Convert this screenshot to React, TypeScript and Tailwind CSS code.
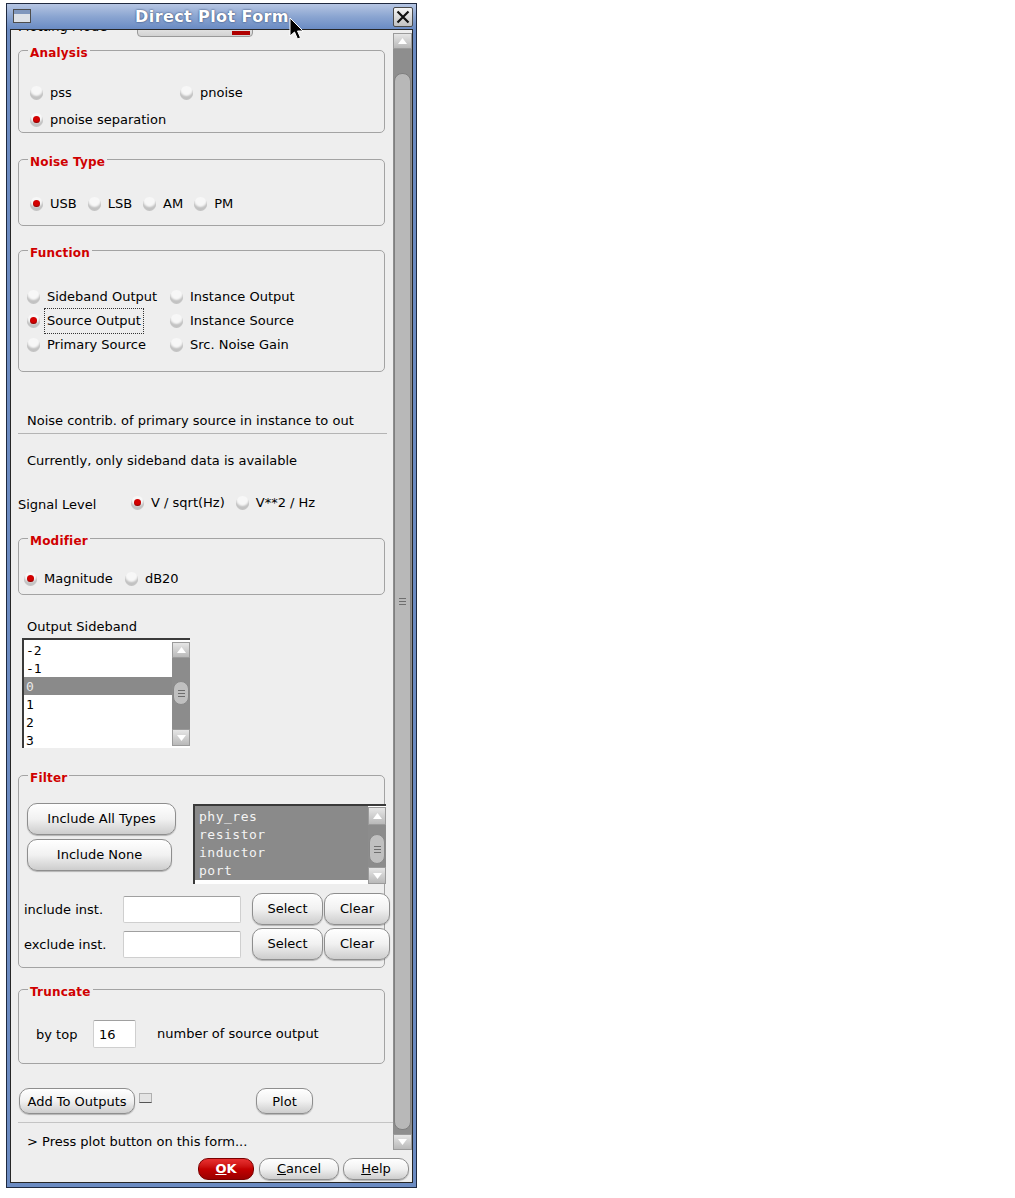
import React from 'react';

function Radio({ on = false }: { on?: boolean }) {
  return (
    <span className="flex h-[13px] w-[13px] shrink-0 items-center justify-center rounded-full bg-[#f7f7f7] shadow-[inset_0_-3px_2px_rgba(0,0,0,0.22),0_1px_0_rgba(0,0,0,0.18)]">
      {on && <span className="h-[7px] w-[7px] rounded-full bg-[#d40000] shadow-[inset_0_-1px_1px_rgba(0,0,0,0.35)]" />}
    </span>
  );
}

function Opt({ on = false, label, focus = false }: { on?: boolean; label: string; focus?: boolean }) {
  return (
    <div className="flex h-[18px] items-center gap-[7px] whitespace-nowrap">
      <Radio on={on} />
      <span className={focus ? 'mt-[2px] outline-1 outline-offset-[2px] outline-dotted outline-[#333]' : 'mt-[2px]'}>{label}</span>
    </div>
  );
}

function Btn({ children, className = '' }: { children: React.ReactNode; className?: string }) {
  return (
    <button className={`flex shrink-0 items-center justify-center rounded-[10px] border border-[#8e8e8e] bg-linear-to-b from-[#ffffff] via-[#f1f1f1] to-[#cdcdcd] text-[13px] text-black shadow-[0_1px_1px_rgba(0,0,0,0.25)] ${className}`}>
      {children}
    </button>
  );
}

function Group({ title, className = '', children }: { title: string; className?: string; children?: React.ReactNode }) {
  return (
    <div className={`relative ml-[7px] w-[367px] shrink-0 rounded-[5px] border border-[#a3a3a3] ${className}`}>
      <span className="absolute left-[9px] top-[-6px] bg-[#eeeeee] px-[2px] text-[12px] font-bold leading-[16px] tracking-[0.2px] text-[#d00000]">
        {title}
      </span>
      {children}
    </div>
  );
}

function Arrow({ up = false, className = '' }: { up?: boolean; className?: string }) {
  return (
    <div className={`flex shrink-0 items-center justify-center border border-[#9b9b9b] bg-linear-to-b from-[#e6e6e6] to-[#b9b9b9] ${className}`}>
      <svg width="9" height="6" viewBox="0 0 9 6">
        <path d={up ? 'M0 6 L4.5 0 L9 6 Z' : 'M0 0 L4.5 6 L9 0 Z'} fill="#ffffff" />
      </svg>
    </div>
  );
}

function Grip() {
  return (
    <div className="flex flex-col gap-[2px]">
      <div className="h-[1px] w-[7px] bg-[#6e6e6e]" />
      <div className="h-[1px] w-[7px] bg-[#6e6e6e]" />
      <div className="h-[1px] w-[7px] bg-[#6e6e6e]" />
    </div>
  );
}

function Field({ className = '', children }: { className?: string; children?: React.ReactNode }) {
  return (
    <div className={`flex shrink-0 items-center rounded-[2px] border border-[#cfcfcf] border-t-[#a0a0a0] bg-white ${className}`}>
      {children}
    </div>
  );
}

const sidebands = ['-2', '-1', '0', '1', '2', '3'];
const types = ['phy_res', 'resistor', 'inductor', 'port'];

export default function App() {
  return (
    <div className="relative min-h-screen bg-white pl-[6px] pt-[3px] font-['DejaVu_Sans',sans-serif] text-[13px] text-black">
      <div className="flex h-[1185px] w-[411px] flex-col border border-[#1f2a40] bg-[#6b8bc2]">
        {/* title bar */}
        <div className="flex h-[25px] shrink-0 items-start bg-linear-to-b from-[#b6c6e3] via-[#8ba5d1] to-[#6a8bc3] px-[3px]">
          <div className="ml-[3px] mt-[5px] flex h-[14px] w-[18px] flex-col border border-[#4d4d4d] bg-[#dde1e8]">
            <div className="h-[4px] bg-[#7f96bd]" />
          </div>
          <div className="flex-1 text-center text-[16px] font-bold leading-[25px] tracking-[0.4px] text-white [text-shadow:0_0_2px_#1f3358]">
            Direct Plot Form
          </div>
          <div className="mt-[3px] flex h-[20px] w-[20px] items-center justify-center rounded-[2px] border border-[#4a4a4a] bg-linear-to-b from-[#f6f6f6] to-[#c2c2c2]">
            <svg width="14" height="14" viewBox="0 0 14 14">
              <path d="M1.5 1.5 L12.5 12.5 M12.5 1.5 L1.5 12.5" stroke="#111" strokeWidth="2.2" />
            </svg>
          </div>
        </div>

        {/* body */}
        <div className="mx-[3px] mb-[4px] flex flex-1 flex-col overflow-hidden border border-[#262626] bg-[#eeeeee]">
          <div className="flex h-[1120px] shrink-0">
            <div className="flex w-[382px] flex-col overflow-hidden">
              {/* Plotting Mode (scrolled off) */}
              <div className="-mt-[13px] flex h-[20px] shrink-0 items-center pl-[7px]">
                <span className="w-[119px] shrink-0">Plotting Mode</span>
                <div className="flex h-[19px] w-[116px] shrink-0 items-end justify-end overflow-hidden rounded-[4px] border border-[#999] bg-linear-to-b from-[#fafafa] to-[#d2d2d2] pr-[2px]">
                  <div className="mb-[1px] h-[4px] w-[18px] bg-[#b00000]" />
                </div>
              </div>

              <Group title="Analysis" className="mt-[13px] h-[83px] pt-[32px]">
                <div className="grid grid-cols-[150px_1fr] gap-y-[9px] pl-[11px]">
                  <Opt label="pss" />
                  <Opt label="pnoise" />
                  <Opt on label="pnoise separation" />
                </div>
              </Group>

              <Group title="Noise Type" className="mt-[26px] h-[67px] pt-[34px]">
                <div className="flex gap-[11px] pl-[11px]">
                  <Opt on label="USB" />
                  <Opt label="LSB" />
                  <Opt label="AM" />
                  <Opt label="PM" />
                </div>
              </Group>

              <Group title="Function" className="mt-[24px] h-[122px] pt-[36px]">
                <div className="grid grid-cols-[143px_1fr] gap-y-[6px] pl-[8px]">
                  <Opt label="Sideband Output" />
                  <Opt label="Instance Output" />
                  <Opt on focus label="Source Output" />
                  <Opt label="Instance Source" />
                  <Opt label="Primary Source" />
                  <Opt label="Src. Noise Gain" />
                </div>
              </Group>

              <div className="mt-[39px] h-[18px] shrink-0 pl-[16px] leading-[20px]">Noise contrib. of primary source in instance to out</div>
              <div className="ml-[7px] mt-[4px] h-[1px] w-[369px] shrink-0 bg-[#b4b4b4]" />
              <div className="mt-[17px] h-[18px] shrink-0 pl-[16px] leading-[20px]">Currently, only sideband data is available</div>

              <div className="mt-[24px] flex h-[18px] shrink-0 items-center pl-[7px]">
                <span className="mt-[5px] w-[113px] shrink-0">Signal Level</span>
                <div className="flex gap-[11px]">
                  <Opt on label="V / sqrt(Hz)" />
                  <Opt label="V**2 / Hz" />
                </div>
              </div>

              <Group title="Modifier" className="mt-[27px] h-[57px] pt-[30px]">
                <div className="flex gap-[12px] pl-[5px]">
                  <Opt on label="Magnitude" />
                  <Opt label="dB20" />
                </div>
              </Group>

              <div className="mt-[22px] h-[18px] shrink-0 pl-[16px] leading-[20px]">Output Sideband</div>

              {/* sideband list */}
              <div className="ml-[11px] mt-[3px] flex h-[110px] w-[168px] shrink-0 border-l-2 border-t-2 border-[#3a3a3a] bg-white">
                <div className="flex-1 pt-[1px] font-['DejaVu_Sans_Mono',monospace] text-[13px]">
                  {sidebands.map((s) => (
                    <div key={s} className={`h-[18px] pl-[2px] leading-[19px] ${s === '0' ? 'bg-[#8a8a8a] text-[#e8e8e8]' : ''}`}>
                      {s}
                    </div>
                  ))}
                </div>
                <div className="flex w-[18px] flex-col py-[2px]">
                  <Arrow up className="h-[16px]" />
                  <div className="flex flex-1 flex-col bg-[#8c8c8c] px-[1px] pt-[23px]">
                    <div className="flex h-[24px] items-center justify-center rounded-[8px] border border-[#888] bg-[#c0c0c0]">
                      <Grip />
                    </div>
                  </div>
                  <Arrow className="h-[17px]" />
                </div>
              </div>

              <Group title="Filter" className="mt-[27px] h-[193px] pt-[27px]">
                <div className="flex h-[81px] pl-[8px]">
                  <div className="flex w-[149px] shrink-0 flex-col gap-[4px]">
                    <Btn className="h-[32px] w-[149px]">Include All Types</Btn>
                    <Btn className="h-[32px] w-[145px]">Include None</Btn>
                  </div>
                  <div className="ml-[17px] mt-[1px] flex h-[80px] w-[193px] shrink-0 border-l-2 border-t-2 border-[#3a3a3a] bg-white">
                    <div className="flex flex-1 flex-col">
                      <div className="bg-[#8a8a8a] pt-[2px] font-['DejaVu_Sans_Mono',monospace] text-[13px] tracking-[0.5px] text-[#f4f4f4]">
                        {types.map((t) => (
                          <div key={t} className="h-[18px] pl-[4px] leading-[18px]">
                            {t}
                          </div>
                        ))}
                      </div>
                    </div>
                    <div className="flex w-[18px] flex-col pt-[1px]">
                      <Arrow up className="h-[18px]" />
                      <div className="flex flex-1 flex-col bg-[#8c8c8c] px-[1px] pt-[9px] pb-[3px]">
                        <div className="flex flex-1 items-center justify-center rounded-[8px] border border-[#888] bg-[#c0c0c0]">
                          <Grip />
                        </div>
                      </div>
                      <Arrow className="h-[17px]" />
                    </div>
                  </div>
                </div>

                <div className="mt-[9px] flex h-[32px] items-center pl-[5px]">
                  <span className="mt-[2px] w-[99px] shrink-0">include inst.</span>
                  <Field className="h-[27px] w-[118px]" />
                  <Btn className="ml-[11px] h-[32px] w-[71px]">Select</Btn>
                  <Btn className="ml-[1px] h-[32px] w-[66px]">Clear</Btn>
                </div>
                <div className="mt-[3px] flex h-[32px] items-center pl-[5px]">
                  <span className="mt-[2px] w-[99px] shrink-0">exclude inst.</span>
                  <Field className="h-[27px] w-[118px]" />
                  <Btn className="ml-[11px] h-[32px] w-[71px]">Select</Btn>
                  <Btn className="ml-[1px] h-[32px] w-[66px]">Clear</Btn>
                </div>
              </Group>

              <Group title="Truncate" className="mt-[21px] h-[75px] pt-[30px]">
                <div className="flex h-[28px] items-center pl-[17px]">
                  <span className="mt-[2px] w-[57px] shrink-0">by top</span>
                  <Field className="h-[28px] w-[43px] pl-[5px] pt-[2px]">16</Field>
                  <span className="ml-[21px] shrink-0">number of source output</span>
                </div>
              </Group>

              <div className="mt-[24px] flex h-[26px] shrink-0 items-center pl-[8px]">
                <Btn className="h-[26px] w-[116px] pt-[2px]">Add To Outputs</Btn>
                <div className="mb-[6px] ml-[4px] h-[10px] w-[13px] border border-[#b0b0b0] border-b-[#555] bg-[#e4e4e4]" />
                <Btn className="ml-[104px] h-[26px] w-[57px] pt-[2px]">Plot</Btn>
              </div>

              <div className="ml-[7px] mt-[8px] h-[1px] shrink-0 bg-[#c4c4c4]" />
              <div className="mt-[9px] h-[18px] shrink-0 pl-[16px] leading-[20px]">&gt; Press plot button on this form...</div>
            </div>

            {/* main scrollbar */}
            <div className="flex w-[19px] flex-col pt-[3px]">
              <Arrow up className="h-[16px]" />
              <div className="flex flex-1 flex-col bg-[#8e8e8e] px-[1px] pb-[4px] pt-[24px]">
                <div className="flex flex-1 items-center justify-center rounded-[8px] border border-[#7f7f7f] bg-[#b8b8b8]">
                  <Grip />
                </div>
              </div>
              <Arrow className="h-[16px]" />
            </div>
          </div>

          {/* dialog buttons */}
          <div className="flex flex-1 items-start justify-end pr-[3px] pt-[8px]">
            <button className="flex h-[22px] w-[56px] items-center justify-center rounded-[10px] border border-[#7a0000] bg-linear-to-b from-[#e83030] via-[#c40000] to-[#9a0000] text-[13px] font-bold text-white">
              <span className="underline">O</span>K
            </button>
            <Btn className="ml-[5px] h-[22px] w-[80px]">
              <span className="underline">C</span>ancel
            </Btn>
            <Btn className="ml-[4px] h-[22px] w-[66px]">
              <span className="underline">H</span>elp
            </Btn>
          </div>
        </div>
      </div>

      {/* mouse pointer */}
      <svg className="absolute left-[289px] top-[17px]" width="15" height="24" viewBox="0 0 15 24">
        <path d="M1 1 L1 19 L5.5 15 L8.5 22 L11.5 20.8 L8.5 14 L14 14 Z" fill="#000" stroke="#fff" strokeWidth="1" />
      </svg>
    </div>
  );
}
